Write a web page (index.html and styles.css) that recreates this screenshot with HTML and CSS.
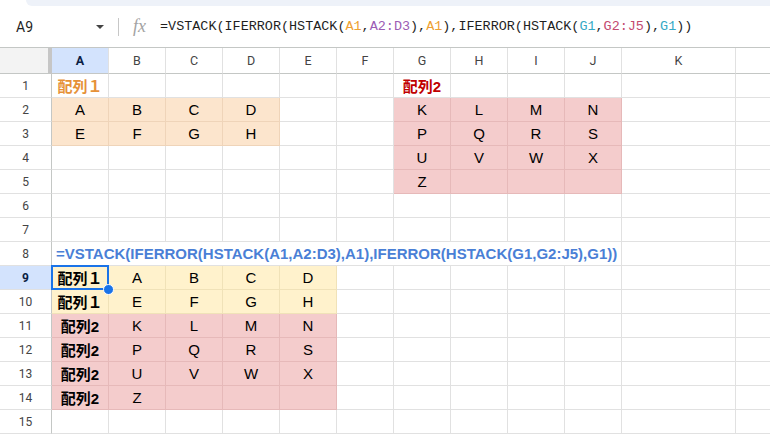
FILE: index.html
```html
<!DOCTYPE html>
<html lang="ja">
<head>
  <meta charset="UTF-8" />
  <title>VSTACK - スプレッドシート</title>
  <link rel="stylesheet" href="styles.css">
</head>
<body>
  <div class="toolbar-edge"></div>

  <div class="formula-bar">
    <div class="name-box">
      <span>A9</span>
      <span class="caret"></span>
    </div>
    <div class="divider"></div>
    <span class="fx">fx</span>
    <div class="formula">=VSTACK(IFERROR(HSTACK(<span class="ref-a1">A1</span>,<span class="ref-a2">A2:D3</span>),<span class="ref-a1">A1</span>),IFERROR(HSTACK(<span class="ref-g1">G1</span>,<span class="ref-g2">G2:J5</span>),<span class="ref-g1">G1</span>))</div>
  </div>

  <div class="grid-wrap">
    <table class="grid">
      <colgroup>
        <col class="col-head">
        <col class="col"><col class="col"><col class="col"><col class="col"><col class="col">
        <col class="col"><col class="col"><col class="col"><col class="col"><col class="col">
        <col class="col-wide">
        <col class="col-rest">
      </colgroup>
      <thead>
        <tr>
          <th class="corner"></th>
          <th class="active">A</th><th>B</th><th>C</th><th>D</th><th>E</th><th>F</th>
          <th>G</th><th>H</th><th>I</th><th>J</th><th>K</th><th></th>
        </tr>
      </thead>
      <tbody>
        <tr>
          <th>1</th>
          <td class="label-orange">配列１</td><td></td><td></td><td></td><td></td><td></td>
          <td class="label-red">配列2</td><td></td><td></td><td></td><td></td><td></td>
        </tr>
        <tr>
          <th>2</th>
          <td class="orange">A</td><td class="orange">B</td><td class="orange">C</td><td class="orange">D</td><td></td><td></td>
          <td class="red">K</td><td class="red">L</td><td class="red">M</td><td class="red">N</td><td></td><td></td>
        </tr>
        <tr>
          <th>3</th>
          <td class="orange">E</td><td class="orange">F</td><td class="orange">G</td><td class="orange">H</td><td></td><td></td>
          <td class="red">P</td><td class="red">Q</td><td class="red">R</td><td class="red">S</td><td></td><td></td>
        </tr>
        <tr>
          <th>4</th>
          <td></td><td></td><td></td><td></td><td></td><td></td>
          <td class="red">U</td><td class="red">V</td><td class="red">W</td><td class="red">X</td><td></td><td></td>
        </tr>
        <tr>
          <th>5</th>
          <td></td><td></td><td></td><td></td><td></td><td></td>
          <td class="red">Z</td><td class="red"></td><td class="red"></td><td class="red"></td><td></td><td></td>
        </tr>
        <tr>
          <th>6</th>
          <td></td><td></td><td></td><td></td><td></td><td></td>
          <td></td><td></td><td></td><td></td><td></td><td></td>
        </tr>
        <tr>
          <th>7</th>
          <td></td><td></td><td></td><td></td><td></td><td></td>
          <td></td><td></td><td></td><td></td><td></td><td></td>
        </tr>
        <tr>
          <th>8</th>
          <td class="formula-text" colspan="10">=VSTACK(IFERROR(HSTACK(A1,A2:D3),A1),IFERROR(HSTACK(G1,G2:J5),G1))</td>
          <td></td><td></td>
        </tr>
        <tr>
          <th class="active">9</th>
          <td class="yellow label selected">配列１</td><td class="yellow">A</td><td class="yellow">B</td><td class="yellow">C</td><td class="yellow">D</td><td></td>
          <td></td><td></td><td></td><td></td><td></td><td></td>
        </tr>
        <tr>
          <th>10</th>
          <td class="yellow label">配列１</td><td class="yellow">E</td><td class="yellow">F</td><td class="yellow">G</td><td class="yellow">H</td><td></td>
          <td></td><td></td><td></td><td></td><td></td><td></td>
        </tr>
        <tr>
          <th>11</th>
          <td class="red label">配列2</td><td class="red">K</td><td class="red">L</td><td class="red">M</td><td class="red">N</td><td></td>
          <td></td><td></td><td></td><td></td><td></td><td></td>
        </tr>
        <tr>
          <th>12</th>
          <td class="red label">配列2</td><td class="red">P</td><td class="red">Q</td><td class="red">R</td><td class="red">S</td><td></td>
          <td></td><td></td><td></td><td></td><td></td><td></td>
        </tr>
        <tr>
          <th>13</th>
          <td class="red label">配列2</td><td class="red">U</td><td class="red">V</td><td class="red">W</td><td class="red">X</td><td></td>
          <td></td><td></td><td></td><td></td><td></td><td></td>
        </tr>
        <tr>
          <th>14</th>
          <td class="red label">配列2</td><td class="red">Z</td><td class="red"></td><td class="red"></td><td class="red"></td><td></td>
          <td></td><td></td><td></td><td></td><td></td><td></td>
        </tr>
        <tr>
          <th>15</th>
          <td></td><td></td><td></td><td></td><td></td><td></td>
          <td></td><td></td><td></td><td></td><td></td><td></td>
        </tr>
      </tbody>
    </table>
  </div>
</body>
</html>
```

FILE: styles.css
```css
body {
  margin: 0;
  background: white;
  font-family: 'Liberation Sans', 'Noto Sans CJK JP', sans-serif;
  overflow: hidden;
}

/* bottom of the toolbar above the formula bar */
.toolbar-edge {
  height: 6px;
  margin-left: 26px;
  background-color: #eef2f9;
  border-bottom-left-radius: 12px;
}

.formula-bar {
  height: 41px;
  display: flex;
  align-items: center;
}

.name-box {
  width: 118px;
  box-sizing: border-box;
  padding: 0 14px 0 16px;
  display: flex;
  align-items: center;
  justify-content: space-between;
  font-family: Roboto, sans-serif;
  font-size: 14px;
  color: #1f1f1f;
}

.caret {
  width: 0;
  height: 0;
  border-left: 4px solid transparent;
  border-right: 4px solid transparent;
  border-top: 4px solid #444;
}

.divider {
  width: 1px;
  height: 18px;
  background-color: #c7c7c7;
}

.fx {
  margin-left: 14px;
  width: 27px;
  font-family: 'Liberation Serif', serif;
  font-style: italic;
  font-size: 18px;
  color: #a3a3a3;
}

.formula {
  font-family: 'Liberation Mono', monospace;
  font-size: 13.45px;
  color: #1f1f1f;
  white-space: nowrap;
}

.ref-a1 { color: #eea032; }
.ref-a2 { color: #9c5cb4; }
.ref-g1 { color: #35a9c6; }
.ref-g2 { color: #c34a70; }

/* sheet grid */
.grid-wrap {
  width: 770px;
  overflow: hidden;
}

.grid {
  border-collapse: separate;
  border-spacing: 0;
  table-layout: fixed;
  width: 836px;
  border-top: 1px solid #c4c7c5;
}

.col-head { width: 52px; }
.col { width: 57px; }
.col-wide { width: 114px; }
.col-rest { width: 100px; }

th, td {
  box-sizing: border-box;
  padding: 0 4px;
  border-right: 1px solid #e1e1e1;
  border-bottom: 1px solid #e1e1e1;
  white-space: nowrap;
}

thead th {
  height: 26px;
  font-family: Roboto, sans-serif;
  font-size: 12.5px;
  font-weight: normal;
  color: #444;
  border-bottom-color: #c4c7c5;
}

tbody th {
  height: 24px;
  font-family: Roboto, sans-serif;
  font-size: 12px;
  font-weight: normal;
  color: #444;
  border-right-color: #c4c7c5;
}

th.corner {
  background-color: #f3f3f3;
  border-right: 4px solid #c6c6c6;
}

th.active {
  background-color: #d3e3fd;
  color: #0b1f44;
  font-weight: bold;
}

td {
  height: 24px;
  font-size: 15px;
  color: #000;
  text-align: center;
}

.label-orange {
  color: #e69138;
  font-weight: bold;
}

.label-red {
  color: #c00000;
  font-weight: bold;
}

.label {
  font-weight: bold;
}

.orange {
  background-color: #fce5cd;
  border-color: #efd4b9;
}

.red {
  background-color: #f4cccc;
  border-color: #e6b9b9;
}

.yellow {
  background-color: #fff2cc;
  border-color: #f0e2b8;
}

.formula-text {
  text-align: left;
  color: #4a7fd6;
  font-weight: bold;
  font-size: 15px;
}

/* active cell outline and fill handle */
.selected {
  position: relative;
}

.selected::after {
  content: "";
  position: absolute;
  left: -1px;
  top: -1px;
  right: -1px;
  bottom: -1px;
  border: 2px solid #1a73e8;
}

.selected::before {
  content: "";
  position: absolute;
  right: -6px;
  bottom: -6px;
  width: 9px;
  height: 9px;
  border-radius: 50%;
  background-color: #1a73e8;
  border: 1px solid white;
  z-index: 1;
}
```
